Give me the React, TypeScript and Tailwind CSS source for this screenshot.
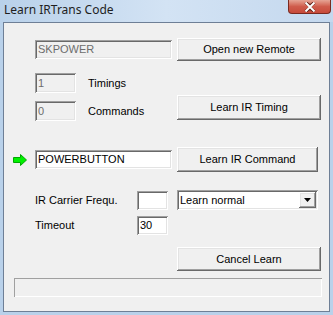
import React from 'react';

const btn =
  'flex items-center justify-center bg-[#f0f0f0] text-black shadow-[inset_-1px_-1px_#696969,inset_1px_1px_#ffffff,inset_-2px_-2px_#a0a0a0,inset_2px_2px_#e3e3e3]';
const sunken =
  'flex items-center px-[3px] shadow-[inset_1px_1px_#a0a0a0,inset_-1px_-1px_#ffffff,inset_2px_2px_#696969,inset_-2px_-2px_#e3e3e3]';

const GreenArrow = () => (
  <svg width="14" height="12" viewBox="0 0 14 12">
    <path d="M0.5 3.5 H7.5 V0.5 L13.5 6 L7.5 11.5 V8.5 H0.5 Z" fill="#00f000" stroke="#00a800" strokeWidth="1" />
  </svg>
);

const App = () => {
  return (
    <div
      className="w-[333px] h-[315px] flex flex-col bg-[#b9d1ea] overflow-hidden"
      style={{ fontFamily: '"Liberation Sans", Arial, sans-serif', fontSize: '11px' }}
    >
      {/* title bar */}
      <div className="h-[22px] flex items-start justify-between bg-gradient-to-r from-[#b9d1ea] via-[#d3e3f4] to-[#c4d8ee]">
        <div
          className="pl-[4px] pt-[1px] text-[12px] text-[#1e1e1e] leading-[18px]"
          style={{ fontFamily: '"Noto Sans", "Open Sans", sans-serif' }}
        >
          Learn IRTrans Code
        </div>
        <div className="mr-[2px] w-[43px] h-[14px] rounded-b-[4px] border border-t-0 border-[#7a2a20] bg-gradient-to-b from-[#e5a495] via-[#cf5c4c] to-[#c74a3a] flex items-center justify-center">
          <svg width="12" height="10" viewBox="0 0 12 10">
            <path d="M1.5 0.5 L6 4 L10.5 0.5 M1.5 9.5 L6 6 L10.5 9.5" stroke="#5a1e14" strokeWidth="3.2" fill="none" />
            <path d="M1.5 0.5 L10.5 9.5 M10.5 0.5 L1.5 9.5" stroke="#ffffff" strokeWidth="2" fill="none" />
          </svg>
        </div>
      </div>

      {/* client area */}
      <div className="mx-[3px] h-[290px] border border-[#6e7f96] bg-[#f0f0f0] flex flex-col pl-[9px]">
        <div className="mt-[15px] h-[23px] flex items-center pl-[22px]">
          <div className={`${sunken} w-[137px] h-[19px] text-[#6d6d6d]`}>SKPOWER</div>
          <div className={`${btn} ml-[5px] w-[144px] h-[23px]`}>Open new Remote</div>
        </div>

        <div className="mt-[12px] h-[20px] flex items-center pl-[22px]">
          <div className={`${sunken} w-[41px] h-[20px] text-[#6d6d6d]`}>1</div>
          <span className="ml-[12px]">Timings</span>
        </div>

        <div className="mt-[2px] h-[26px] flex pl-[22px]">
          <div className="w-[142px] flex items-end">
            <div className={`${sunken} w-[41px] h-[20px] text-[#6d6d6d]`}>0</div>
            <span className="ml-[12px] leading-[20px]">Commands</span>
          </div>
          <div className={`${btn} w-[144px] h-[25px]`}>Learn IR Timing</div>
        </div>

        <div className="mt-[26px] h-[25px] flex items-center">
          <GreenArrow />
          <div className={`${sunken} ml-[8px] w-[137px] h-[19px] bg-white text-black`}>POWERBUTTON</div>
          <div className={`${btn} ml-[5px] w-[141px] h-[25px]`}>Learn IR Command</div>
        </div>

        <div className="mt-[18px] h-[20px] flex items-center pl-[22px]">
          <span className="w-[102px]">IR Carrier Frequ.</span>
          <div className={`${sunken} w-[31px] h-[19px] bg-white`} />
          <div className={`${sunken} ml-[9px] w-[141px] h-[20px] bg-white pr-[2px] justify-between`}>
            <span>Learn normal</span>
            <div className={`${btn} w-[17px] h-[16px]`}>
              <svg width="7" height="4" viewBox="0 0 7 4">
                <path d="M0 0 H7 L3.5 4 Z" fill="#000" />
              </svg>
            </div>
          </div>
        </div>

        <div className="mt-[6px] h-[19px] flex items-center pl-[22px]">
          <span className="w-[102px]">Timeout</span>
          <div className={`${sunken} w-[31px] h-[19px] bg-white`}>30</div>
        </div>

        <div className="mt-[12px] h-[24px] flex pl-[164px]">
          <div className={`${btn} w-[144px] h-[24px]`}>Cancel Learn</div>
        </div>

        <div className="mt-[7px] pl-[1px]">
          <div className="w-[308px] h-[19px] shadow-[inset_1px_1px_#a0a0a0,inset_-1px_-1px_#ffffff]" />
        </div>
      </div>
    </div>
  );
};

export default App;
